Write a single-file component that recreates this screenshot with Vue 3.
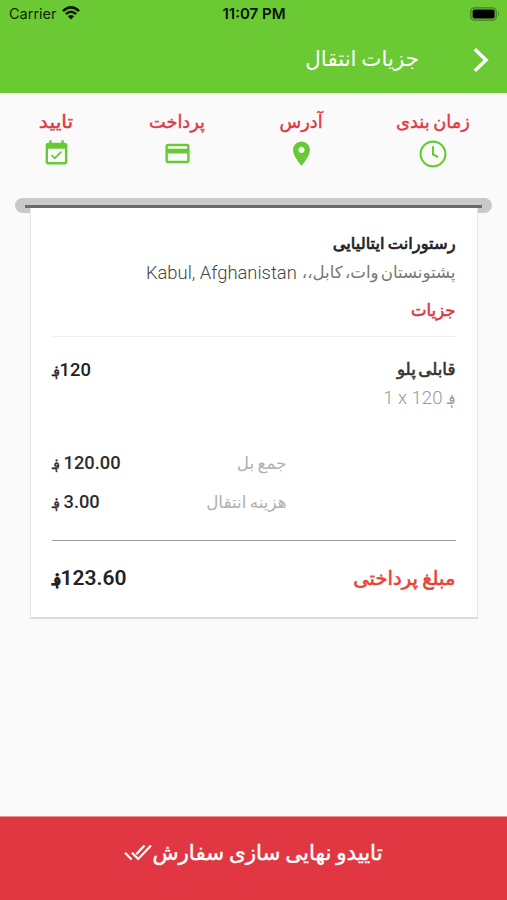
<script setup>
const steps = [
  { key: 'time', label: 'زمان بندی' },
  { key: 'address', label: 'آدرس' },
  { key: 'payment', label: 'پرداخت' },
  { key: 'confirm', label: 'تایید' },
]
const totals = [
  { key: 'sum', label: 'جمع بل', amount: '120.00' },
  { key: 'delivery', label: 'هزینه انتقال', amount: '3.00' },
]
</script>

<template>
  <div class="screen">
    <header class="header">
      <div class="status">
        <div class="carrier">
          <span>Carrier</span>
          <svg class="wifi" viewBox="0 0 18 14" width="18" height="14">
            <g fill="none" stroke="#0b1606" stroke-width="2.5">
              <path d="M1 5.2Q9-2.4 17 5.2" />
              <path d="M3.9 8.1Q9 3.4 14.1 8.1" />
            </g>
            <path d="M5.9 10.2Q9 7.7 12.1 10.2L9 13.5Z" fill="#0b1606" />
          </svg>
        </div>
        <span class="clock">11:07 PM</span>
        <svg class="battery" viewBox="0 0 31 14" width="31" height="14">
          <rect x=".8" y=".8" width="25.4" height="12.4" rx="3.6" fill="none" stroke="#418021" stroke-width="1.3" />
          <rect x="2.6" y="2.4" width="22" height="9.2" rx="1.8" fill="#000" />
          <path d="M28 4.8q2 2.2 0 4.4z" fill="#418021" />
        </svg>
      </div>
      <div class="bar">
        <svg class="chevron" viewBox="0 0 16 26" width="16" height="26">
          <path d="M1.8 2.2L13 13 1.8 23.8" fill="none" stroke="#fff" stroke-width="3.5" />
        </svg>
        <h1 class="title"><span class="fa">جزیات انتقال</span></h1>
      </div>
    </header>

    <nav class="steps">
      <div v-for="s in steps" :key="s.key" class="step" :class="s.key">
        <span class="step-label"><span class="fa">{{ s.label }}</span></span>
        <svg v-if="s.key === 'time'" class="clock-icon" viewBox="0 0 28 28" width="28" height="28">
          <circle cx="14" cy="14" r="12.4" fill="none" stroke="#67ca34" stroke-width="2.1" />
          <path d="M14 6.2V14.4L19 17" fill="none" stroke="#67ca34" stroke-width="2.1" />
        </svg>
        <svg v-else-if="s.key === 'address'" viewBox="0 0 24 24" width="29" height="29">
          <path fill="#67ca34" d="M12 2C8.13 2 5 5.13 5 9c0 5.25 7 13 7 13s7-7.75 7-13c0-3.87-3.13-7-7-7zm0 9.5c-1.38 0-2.5-1.12-2.5-2.5s1.12-2.5 2.5-2.5 2.5 1.12 2.5 2.5-1.12 2.5-2.5 2.5z" />
        </svg>
        <svg v-else-if="s.key === 'payment'" viewBox="0 0 24 24" width="29" height="29">
          <path fill="#67ca34" d="M20 4H4c-1.11 0-1.99.89-1.99 2L2 18c0 1.11.89 2 2 2h16c1.11 0 2-.89 2-2V6c0-1.11-.89-2-2-2zm0 14H4v-6h16v6zm0-10H4V6h16v2z" />
        </svg>
        <svg v-else viewBox="0 0 24 24" width="29" height="29">
          <path fill="#67ca34" d="M16.53 11.06L15.47 10l-4.88 4.88-2.12-2.12-1.06 1.06L10.59 17l5.94-5.94zM19 3h-1V1h-2v2H8V1H6v2H5c-1.11 0-1.99.9-1.99 2L3 19c0 1.1.89 2 2 2h14c1.1 0 2-.9 2-2V5c0-1.1-.9-2-2-2zm0 16H5V8h14v11z" />
        </svg>
      </div>
    </nav>

    <main class="receipt">
      <div class="slot"><div class="slit"></div></div>
      <section class="card">
        <div class="row place"><span class="fa">رستورانت ایتالیایی</span></div>
        <div class="row address-line">
          <span class="fa">پشتونستان وات، کابل،،</span>
          <span class="latin" dir="ltr">Kabul, Afghanistan</span>
        </div>
        <div class="row details"><span class="fa">جزیات</span></div>
        <div class="row item">
          <span class="fa">قابلی پلو</span>
          <span class="money" dir="ltr"><bdi class="afn">؋</bdi><bdi>120</bdi></span>
        </div>
        <div class="row quantity">
          <span class="money" dir="ltr"><bdi>1 x 120</bdi><bdi class="afn">؋</bdi></span>
        </div>
        <div class="totals">
          <div v-for="t in totals" :key="t.key" class="row total" :class="t.key">
            <span class="fa">{{ t.label }}</span>
            <span class="money" dir="ltr"><bdi class="afn">؋</bdi><bdi>{{ t.amount }}</bdi></span>
          </div>
        </div>
        <div class="row payable">
          <span class="fa">مبلغ پرداختی</span>
          <span class="money" dir="ltr"><bdi class="afn">؋</bdi><bdi>123.60</bdi></span>
        </div>
      </section>
    </main>

    <footer class="confirm-bar">
      <span class="fa">تاییدو نهایی سازی سفارش</span>
      <svg viewBox="0 0 28 17" width="28" height="17">
        <g fill="none" stroke="#fff" stroke-width="2.2">
          <path d="M1 8.8L7.6 15.5" />
          <path d="M8 8.8L14.2 15L27 1.5" />
          <path d="M12.3 10.3L20.5 1.5" />
        </g>
      </svg>
    </footer>
  </div>
</template>

<style>
body {
  margin: 0;
}
</style>

<style scoped>
.screen {
  direction: rtl;
  display: flex;
  flex-direction: column;
  width: 507px;
  height: 900px;
  overflow: hidden;
  background: #fafafa;
  font-family: Roboto, "DejaVu Sans", sans-serif;
}
svg {
  display: block;
  flex: none;
}
.fa,
.afn {
  display: inline-block;
  font-family: "DejaVu Sans", sans-serif;
  white-space: nowrap;
}
.header {
  height: 93px;
  background: #6bca34;
  border-bottom: 1px solid #dcfccb;
  flex: none;
}
.status {
  direction: ltr;
  display: grid;
  grid-template-columns: 1fr auto 1fr;
  align-items: center;
  height: 28px;
  padding: 0 6px 0 9px;
  font: 14.5px/28px Inter, sans-serif;
  color: #10240a;
}
.carrier {
  display: flex;
  align-items: center;
  gap: 6px;
}
.wifi {
  margin: -2px 0 0 -1px;
}
.clock {
  margin-right: 2px;
  font-weight: 600;
  font-size: 15px;
  color: #071203;
}
.battery {
  justify-self: end;
  margin-top: -1px;
}
.bar {
  display: flex;
  align-items: center;
  height: 63px;
  padding-right: 18px;
}
.title {
  margin: -2px 54px 0 0;
  font-size: 21.4px;
  font-weight: 400;
  line-height: 30px;
  word-spacing: -2px;
  color: #fff;
}
.steps {
  display: flex;
  height: 103px;
  flex: none;
}
.step {
  display: flex;
  flex-direction: column;
  align-items: center;
  padding-top: 15px;
  box-sizing: border-box;
  color: #dd3845;
}
.step.time { width: 148px; }
.step.address { width: 116px; }
.step.payment { width: 132px; }
.step.confirm { width: 110px; }
.step-label {
  font-size: 17.8px;
  line-height: 26px;
  height: 30px;
  word-spacing: -2px;
  -webkit-text-stroke: 0.4px currentColor;
}
.confirm .fa {
  transform: scaleX(1.15);
}
.clock-icon {
  margin-top: 1px;
}
.slot {
  margin: 1px 15px 0;
  height: 15px;
  box-sizing: border-box;
  padding: 7px 10px 0;
  border-radius: 8px;
  background: #c9c9c9;
}
.slit {
  height: 3px;
  background: #6b6b6b;
}
.card {
  position: relative;
  width: 448px;
  height: 411px;
  margin: -5px auto 0;
  padding: 23px 21px 0;
  box-sizing: border-box;
  background: #fff;
  border: 1px solid #e8e8e8;
  border-top: 0;
  border-bottom: 2px solid #dcdcdc;
}
.row {
  display: flex;
  align-items: center;
  white-space: nowrap;
}
.money {
  display: inline-flex;
  align-items: baseline;
}
.place {
  height: 24px;
  font-size: 16.3px;
  word-spacing: -2px;
  color: #222;
  -webkit-text-stroke: 0.7px currentColor;
}
.address-line {
  height: 34px;
  gap: 5px;
  font-size: 16.6px;
  word-spacing: -3px;
  color: #777;
}
.latin {
  font-size: 18.4px;
  font-weight: 300;
  word-spacing: 0;
  color: #444;
}
.details {
  height: 48px;
  padding-bottom: 4px;
  font-size: 16.5px;
  color: #dd3845;
  border-bottom: 1px solid #f0f0f0;
  box-sizing: border-box;
  -webkit-text-stroke: 0.6px currentColor;
}
.item {
  justify-content: space-between;
  height: 64px;
  font-size: 16.8px;
  word-spacing: -3px;
  color: #333;
}
.item .fa {
  -webkit-text-stroke: 0.6px currentColor;
}
.item .money {
  font-size: 18.4px;
  font-weight: 500;
  color: #222;
}
.quantity {
  height: 30px;
  margin-top: -18px;
  font-size: 18.6px;
  font-weight: 300;
  color: #999;
}
.afn {
  font-size: 0.78em;
  -webkit-text-stroke: 0.4px currentColor;
}
.quantity .afn {
  -webkit-text-stroke: 0;
}
.quantity .money {
  gap: 4px;
}
.totals {
  height: 128px;
  padding-top: 30px;
  box-sizing: border-box;
  border-bottom: 1px solid #a0a0a0;
}
.total {
  justify-content: space-between;
  height: 39px;
  padding-right: 169px;
  font-size: 16.8px;
  word-spacing: -2px;
  color: #b0b0b0;
}
.total .money {
  font-size: 18.3px;
  font-weight: 500;
  color: #2c2c2c;
  gap: 4px;
}
.payable {
  justify-content: space-between;
  height: 74px;
  font-size: 19.6px;
  word-spacing: -2px;
  color: #ea4335;
}
.payable .fa {
  -webkit-text-stroke: 0.6px currentColor;
}
.payable .money {
  font-size: 21px;
  font-weight: 600;
  color: #222;
}
.confirm-bar {
  display: flex;
  align-items: center;
  justify-content: center;
  height: 84px;
  padding-bottom: 13px;
  box-sizing: border-box;
  margin-top: auto;
  background: #e13743;
  border-top: 1px solid #ee929a;
  color: #fff;
  font-size: 21.4px;
  word-spacing: -2px;
  -webkit-text-stroke: 0.4px currentColor;
}
</style>
